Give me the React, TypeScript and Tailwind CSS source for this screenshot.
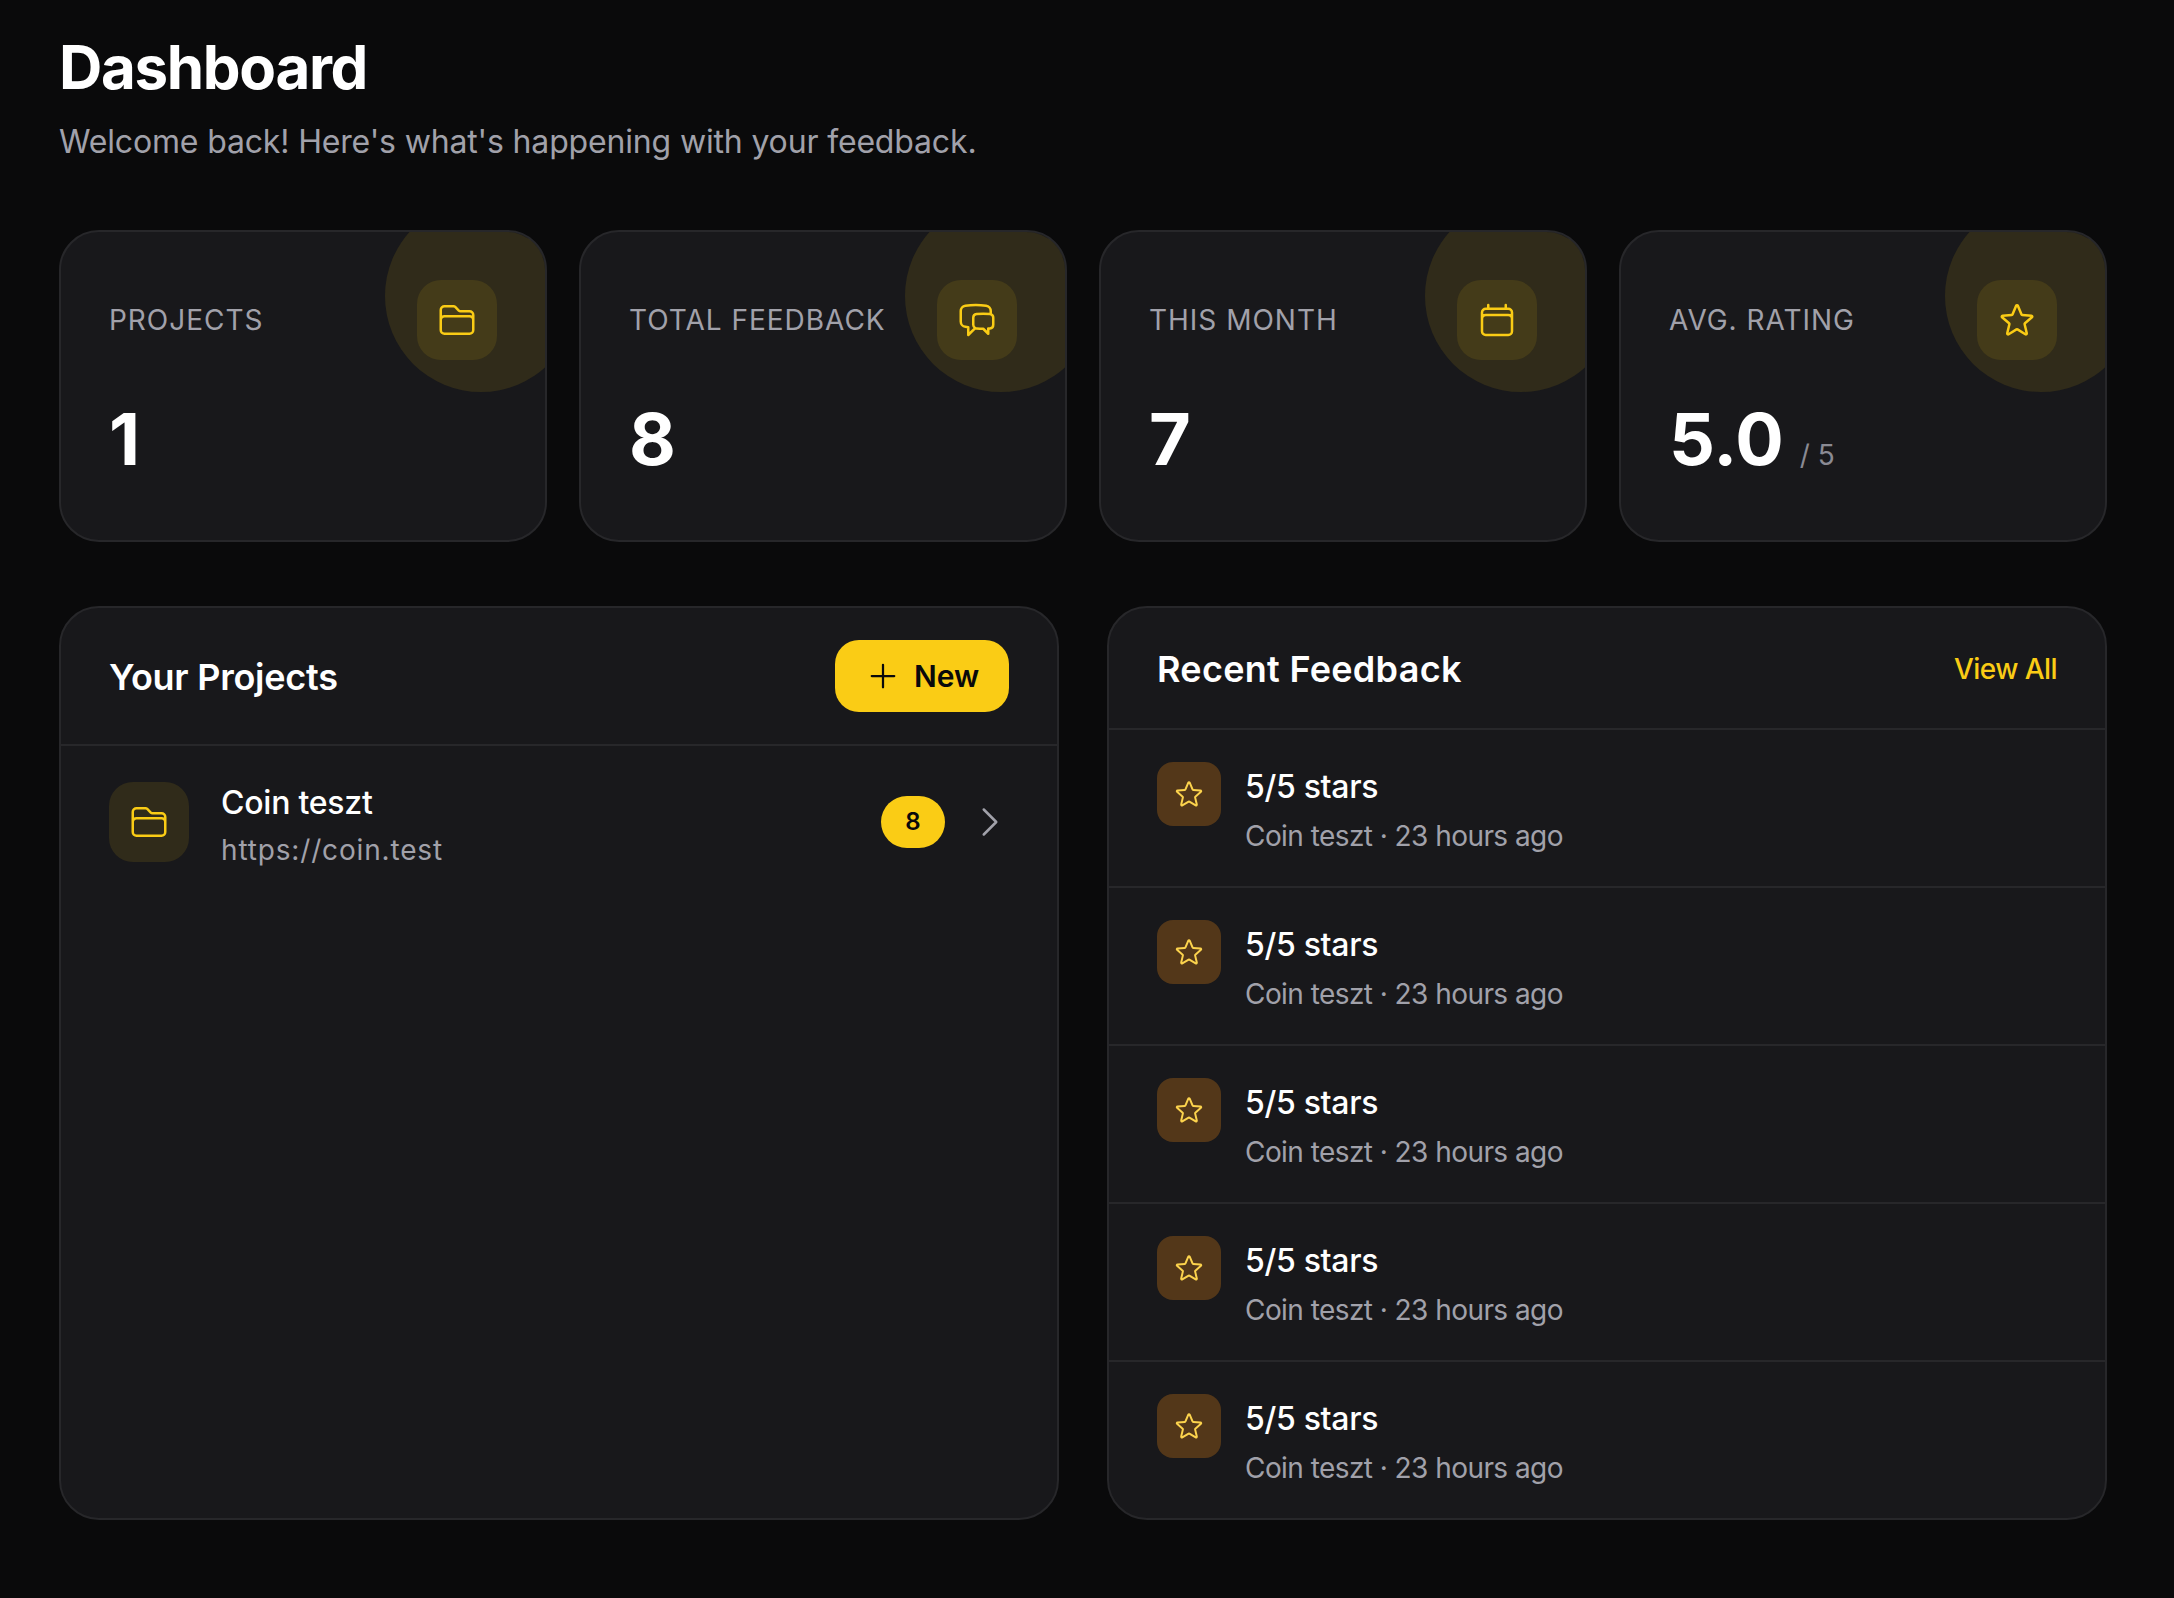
import type { ComponentType } from 'react'
import {
  HiOutlineCalendar,
  HiOutlineChatBubbleLeftRight,
  HiOutlineChevronRight,
  HiOutlineFolder,
  HiOutlinePlus,
  HiOutlineStar,
} from 'react-icons/hi2'

type Stat = {
  label: string
  value: string
  suffix?: string
  icon: ComponentType<{ className?: string }>
}

const stats: Stat[] = [
  { label: 'Projects', value: '1', icon: HiOutlineFolder },
  { label: 'Total Feedback', value: '8', icon: HiOutlineChatBubbleLeftRight },
  { label: 'This Month', value: '7', icon: HiOutlineCalendar },
  { label: 'Avg. Rating', value: '5.0', suffix: '/ 5', icon: HiOutlineStar },
]

const feedback = [1, 2, 3, 4, 5]

function StatCard({ stat }: { stat: Stat }) {
  const Icon = stat.icon
  return (
    <div className="relative h-[312px] overflow-hidden rounded-[40px] border-2 border-[#27272a] bg-[#18181b] px-[48px] pt-[48px]">
      {/* Corner glow */}
      <div className="absolute -right-[32px] -top-[32px] h-[192px] w-[192px] rounded-full bg-[#facc15]/[0.11]" />

      <div className="relative flex h-[80px] items-center justify-between">
        <p className="text-[28px] font-normal uppercase leading-[40px] tracking-[0.035em] text-[#a1a1aa]">{stat.label}</p>
        <div className="flex h-[80px] w-[80px] items-center justify-center rounded-[24px] bg-[#facc15]/10">
          <Icon className="h-[40px] w-[40px] text-[#facc15]" />
        </div>
      </div>

      <div className="relative mt-[39px] flex items-baseline gap-[16px]">
        <span className="text-[72px] font-bold leading-[80px] text-white">{stat.value}</span>
        {stat.suffix && <span className="text-[28px] leading-[40px] text-[#8a8a93]">{stat.suffix}</span>}
      </div>
    </div>
  )
}

export default function App() {
  return (
    <div className="min-h-screen bg-[#0a0a0b] pb-[78px] pl-[59px] pr-[67px] pt-[31px] font-['Inter',sans-serif] text-white">
      {/* Header */}
      <h1 className="text-[60px] font-bold leading-[72px] tracking-[-0.022em] text-white">Dashboard</h1>
      <p className="mt-[15px] text-[32px] leading-[48px] tracking-[-0.005em] text-[#a1a1aa]">
        Welcome back! Here's what's happening with your feedback.
      </p>

      {/* Stats */}
      <div className="mt-[64px] grid grid-cols-4 gap-[32px]">
        {stats.map((s) => (
          <StatCard key={s.label} stat={s} />
        ))}
      </div>

      <div className="mt-[64px] grid grid-cols-2 gap-[48px]">
        {/* Projects */}
        <div className="overflow-hidden rounded-[40px] border-2 border-[#27272a] bg-[#18181b]">
          <div className="flex items-center justify-between border-b-2 border-[#27272a] px-[48px] py-[32px]">
            <h2 className="pt-[2px] text-[36px] font-semibold leading-[54px] tracking-[-0.007em]">Your Projects</h2>
            <button className="flex h-[72px] w-[174px] items-center justify-center gap-[13px] rounded-[24px] bg-[#facc15] text-[30px] font-semibold text-[#09090b]">
              <HiOutlinePlus className="h-[36px] w-[36px]" />
              New
            </button>
          </div>
          <div className="flex items-center px-[48px] py-[28px]">
            <div className="flex h-[80px] w-[80px] shrink-0 items-center justify-center rounded-[24px] bg-[#facc15]/[0.11]">
              <HiOutlineFolder className="h-[40px] w-[40px] text-[#facc15]" />
            </div>
            <div className="ml-[32px] mt-[2px] min-w-0 flex-1">
              <p className="text-[32px] font-medium leading-[54px] tracking-[-0.0075em]">Coin teszt</p>
              <p className="text-[28px] leading-[40px] tracking-[0.03em] text-[#a1a1aa]">https://coin.test</p>
            </div>
            <span className="flex h-[52px] w-[64px] items-center justify-center rounded-full bg-[#facc15] text-[24px] font-semibold text-[#09090b]">
              8
            </span>
            <HiOutlineChevronRight className="-mr-[1px] ml-[25px] h-[40px] w-[40px] text-[#a1a1aa]" />
          </div>
        </div>

        {/* Recent feedback */}
        <div className="overflow-hidden rounded-[40px] border-2 border-[#27272a] bg-[#18181b]">
          <div className="flex items-center justify-between border-b-2 border-[#27272a] px-[48px] py-[32px]">
            <h2 className="pt-[2px] text-[36px] font-semibold leading-[54px] tracking-[0.008em]">Recent Feedback</h2>
            <span className="pt-[2px] text-[28px] font-medium leading-[40px] tracking-[-0.02em] text-[#facc15]">View All</span>
          </div>
          {feedback.map((id, i) => (
            <div
              key={id}
              className={`flex gap-[24px] px-[48px] py-[32px] ${i < feedback.length - 1 ? 'border-b-2 border-[#27272a]' : ''}`}
            >
              <div className="flex h-[64px] w-[64px] shrink-0 items-center justify-center rounded-[16px] bg-[#533719]">
                <HiOutlineStar className="h-[32px] w-[32px] text-[#fcd34d]" />
              </div>
              <div>
                <p className="text-[32px] font-medium leading-[50px] tracking-[-0.01em]">5/5 stars</p>
                <p className="mt-[6px] text-[28px] leading-[36px] tracking-[-0.02em] text-[#a1a1aa]">Coin teszt · 23 hours ago</p>
              </div>
            </div>
          ))}
        </div>
      </div>
    </div>
  )
}
